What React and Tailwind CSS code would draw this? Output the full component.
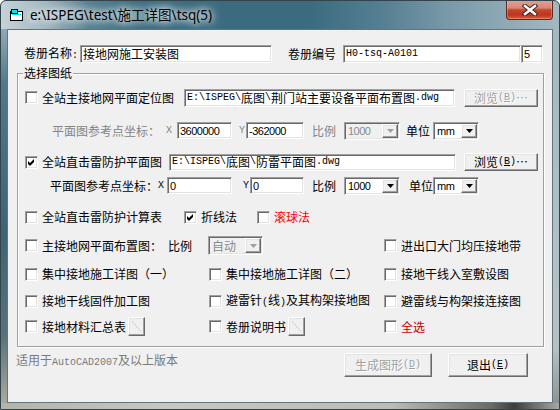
const SUNKEN = "border border-t-[#a0a0a0] border-l-[#a0a0a0] border-b-white border-r-white shadow-[inset_1px_1px_0_#696969,inset_-1px_-1px_0_#e3e3e3]"
const RAISED = "border border-t-white border-l-white border-b-[#696969] border-r-[#696969] shadow-[inset_-1px_-1px_0_#a0a0a0,inset_1px_1px_0_#e3e3e3]"
const MONO = "font-['Liberation_Mono',monospace] text-[10px]"
const NUM = "font-['Liberation_Sans',sans-serif] text-[11px] tracking-[-0.5px]"

function Mixed({ text }) {
  return text.split(/([\x20-\x7e]+)/).filter(Boolean).map((part, i) =>
    /^[\x20-\x7e]+$/.test(part)
      ? <span key={i} className={MONO}>{part}</span>
      : <span key={i}>{part}</span>
  )
}

function Check({ checked, className = '' }) {
  return (
    <span className={`w-[13px] h-[13px] shrink-0 bg-white flex items-center justify-center ${SUNKEN} ${className}`}>
      {checked && (
        <svg width="7" height="7" viewBox="0 0 7 7">
          <polygon points="0,2 2,4 6,0 6,3 2,7 0,5" fill="#000" />
        </svg>
      )}
    </span>
  )
}

function Field({ className = '', children }) {
  return (
    <div className={`shrink-0 bg-white flex items-center p-[1px] pl-[2px] overflow-hidden whitespace-nowrap ${SUNKEN} ${className}`}>
      {children}
    </div>
  )
}

function Combo({ className = '', disabled, children }) {
  return (
    <div className={`shrink-0 flex items-stretch p-[1px] ${disabled ? 'bg-[#f0f0f0] text-[#8a8a8a]' : 'bg-white'} ${SUNKEN} ${className}`}>
      <span className="flex-1 flex items-center pl-[2px] overflow-hidden whitespace-nowrap">{children}</span>
      <span className={`w-[16px] shrink-0 flex items-center justify-center bg-[#f0f0f0] ${RAISED}`}>
        <svg width="7" height="4" viewBox="0 0 7 4">
          <path d="M0 0h7L3.5 4z" fill={disabled ? '#a0a0a0' : '#000'} />
        </svg>
      </span>
    </div>
  )
}

function Btn({ className = '', disabled, children }) {
  return (
    <div className={`shrink-0 bg-[#f0f0f0] flex items-center justify-center whitespace-nowrap ${RAISED} ${disabled ? 'text-[#a0a0a0] [text-shadow:1px_1px_0_#fff]' : 'text-black'} ${className}`}>
      {children}
    </div>
  )
}

function Dots() {
  return (
    <svg width="11" height="13" viewBox="0 0 11 13">
      <path d="M1 1L10 12" stroke="#b4b4b4" strokeWidth="1" strokeDasharray="1 1" />
    </svg>
  )
}

function TitleIcon() {
  return (
    <svg width="14" height="12" viewBox="0 0 14 12">
      <rect x="0.5" y="2.5" width="12" height="9" fill="#fff" stroke="#000" />
      <rect x="1.5" y="0.5" width="6" height="4" fill="#18d8f0" stroke="#000" />
      <rect x="2" y="5" width="9" height="1" fill="#18d8f0" />
    </svg>
  )
}

function CloseX() {
  return (
    <svg width="16" height="12" viewBox="0 0 16 12">
      <path d="M3 2L13 10M13 2L3 10" stroke="#4a2a24" strokeWidth="4.6" strokeLinecap="square" />
      <path d="M3 2L13 10M13 2L3 10" stroke="#fff" strokeWidth="2.4" strokeLinecap="square" />
    </svg>
  )
}

export default function App() {
  return (
    <div className="w-[560px] h-[410px] bg-white font-['Noto_Sans_CJK_SC',sans-serif] text-[12px] leading-[14px] text-black">
      <div className="w-[560px] h-[410px] flex flex-col border border-[#34444c] rounded-t-[6px] overflow-hidden bg-[linear-gradient(90deg,#c6d2d8_0%,#a3b8c1_8%,#557f90_16%,#3a6a7e_25%,#3b6b7f_55%,#537f91_68%,#7899a8_80%,#a4b8c1_100%)]">
        {/* title bar */}
        <div className="h-[28px] flex items-start shrink-0">
          <div className="ml-[9px] mt-[8px]"><TitleIcon /></div>
          <div className="ml-[6px] mt-[5px] font-['Noto_Sans','Noto_Sans_CJK_SC',sans-serif] text-[13.5px] leading-[18px] [text-shadow:0_0_6px_#fff,0_0_10px_rgba(255,255,255,0.9),0_0_14px_rgba(255,255,255,0.7)]">
            {String.raw`e:\ISPEG\test\施工详图\tsq(5)`}
          </div>
          <div className="ml-auto mr-[6px] -mt-[1px] w-[47px] h-[20px] rounded-b-[4px] border border-[#5b2a21] border-t-0 flex items-center justify-center shadow-[inset_0_0_0_1px_rgba(255,200,190,0.35)] bg-[linear-gradient(180deg,#e3a294_0%,#d88877_42%,#c5472f_52%,#bd341b_78%,#d8633f_100%)]">
            <CloseX />
          </div>
        </div>

        <div className="flex h-[374px] shrink-0">
          <div className="w-[6px] shrink-0 bg-[linear-gradient(180deg,#8eaab6_0%,#4f7888_15%,#3e6474_55%,#56727c_82%,#aaa99e_100%)]" />
          {/* client */}
          <div className="w-[546px] h-[374px] shrink-0 border border-[#62747c] bg-[#f0f0f0] flex flex-col">
            <div className="mt-[15px] h-[18px] flex items-center">
              <span className="ml-[16px] w-[56px] shrink-0">卷册名称<span className={MONO}>:</span></span>
              <Field className="w-[192px] h-[18px]">接地网施工安装图</Field>
              <span className="ml-[16px] w-[55px] shrink-0">卷册编号</span>
              <Field className="w-[178px] h-[18px]"><span className={MONO}>H0-tsq-A0101</span></Field>
              <Field className="w-[22px] h-[18px]"><span className={NUM}>5</span></Field>
            </div>

            <div className="relative ml-[9px] mt-[10px] w-[527px] h-[274px] shrink-0 border border-[#a0a0a0] shadow-[inset_1px_1px_0_#fff,1px_1px_0_#fff] flex flex-col">
              <span className="absolute left-[5px] -top-[8px] px-[1px] bg-[#f0f0f0]">选择图纸</span>

              <div className="mt-[14px] h-[19px] flex items-center">
                <Check className="ml-[7px]" />
                <span className="ml-[4px] w-[142px] shrink-0">全站主接地网平面定位图</span>
                <Field className="w-[271px] h-[18px]"><Mixed text={String.raw`E:\ISPEG\底图\荆门站主要设备平面布置图.dwg`} /></Field>
                <Btn disabled className="ml-[9px] w-[74px] h-[18px]">
                  浏览<span className={MONO}>(<u>B</u>)</span>⋯
                </Btn>
              </div>

              <div className="mt-[15px] h-[17px] flex items-center text-[#838383]">
                <span className="ml-[34px] w-[114px] shrink-0">平面图参考点坐标：</span>
                <span className={`w-[11px] shrink-0 ${MONO}`}>X</span>
                <Field className="w-[55px] h-[17px] text-black"><span className={NUM}>3600000</span></Field>
                <span className={`ml-[7px] w-[7px] shrink-0 ${MONO}`}>Y</span>
                <Field className="w-[58px] h-[17px] text-black"><span className={NUM}>-362000</span></Field>
                <span className="ml-[8px] w-[32px] shrink-0">比例</span>
                <Combo disabled className="w-[56px] h-[18px]"><span className={NUM}>1000</span></Combo>
                <span className="ml-[6px] w-[27px] shrink-0 text-black">单位</span>
                <Combo className="w-[46px] h-[18px] text-black"><span className={NUM}>mm</span></Combo>
              </div>

              <div className="mt-[14px] h-[18px] flex items-center">
                <Check checked className="ml-[7px]" />
                <span className="ml-[4px] w-[127px] shrink-0">全站直击雷防护平面图</span>
                <Field className="w-[287px] h-[17px]"><Mixed text={String.raw`E:\ISPEG\底图\防雷平面图.dwg`} /></Field>
                <Btn className="ml-[8px] w-[74px] h-[18px]">
                  浏览<span className={MONO}>(<u>B</u>)</span>⋯
                </Btn>
              </div>

              <div className="mt-[6px] h-[17px] flex items-center">
                <span className="ml-[32px] w-[108px] shrink-0">平面图参考点坐标：</span>
                <span className={`w-[9px] shrink-0 ${MONO}`}>X</span>
                <Field className="w-[65px] h-[17px]"><span className={NUM}>0</span></Field>
                <span className={`ml-[11px] w-[7px] shrink-0 ${MONO}`}>Y</span>
                <Field className="w-[54px] h-[17px]"><span className={NUM}>0</span></Field>
                <span className="ml-[8px] w-[32px] shrink-0">比例</span>
                <Combo className="w-[56px] h-[18px]"><span className={NUM}>1000</span></Combo>
                <span className="ml-[9px] w-[24px] shrink-0">单位</span>
                <Combo className="w-[46px] h-[18px]"><span className={NUM}>mm</span></Combo>
              </div>

              <div className="mt-[16px] h-[14px] flex items-center">
                <Check className="ml-[7px]" />
                <span className="ml-[4px] w-[142px] shrink-0">全站直击雷防护计算表</span>
                <Check checked />
                <span className="ml-[4px] w-[56px] shrink-0">折线法</span>
                <Check />
                <span className="ml-[4px] text-[#ff0000]">滚球法</span>
              </div>

              <div className="mt-[12px] h-[19px] flex items-center">
                <Check className="ml-[7px]" />
                <span className="ml-[4px] w-[126px] shrink-0">主接地网平面布置图：</span>
                <span className="w-[40px] shrink-0">比例</span>
                <Combo disabled className="w-[55px] h-[19px]">自动</Combo>
                <Check className="ml-[121px]" />
                <span className="ml-[4px]">进出口大门均压接地带</span>
              </div>

              <div className="mt-[12px] h-[14px] flex items-center">
                <Check className="ml-[7px]" />
                <span className="ml-[4px] w-[167px] shrink-0">集中接地施工详图（一）</span>
                <Check />
                <span className="ml-[4px] w-[158px] shrink-0">集中接地施工详图（二）</span>
                <Check />
                <span className="ml-[4px]">接地干线入室敷设图</span>
              </div>

              <div className="mt-[13px] h-[14px] flex items-center">
                <Check className="ml-[7px]" />
                <span className="ml-[4px] w-[167px] shrink-0">接地干线固件加工图</span>
                <Check />
                <span className="ml-[4px] w-[158px] shrink-0"><Mixed text="避雷针(线)及其构架接地图" /></span>
                <Check />
                <span className="ml-[4px]">避雷线与构架接连接图</span>
              </div>

              <div className="mt-[9px] h-[19px] flex items-center">
                <Check className="ml-[7px]" />
                <span className="ml-[4px] w-[86px] shrink-0">接地材料汇总表</span>
                <Btn className="w-[17px] h-[19px]"><Dots /></Btn>
                <Check className="ml-[64px]" />
                <span className="ml-[4px] w-[62px] shrink-0">卷册说明书</span>
                <Btn className="w-[17px] h-[19px]"><Dots /></Btn>
                <Check className="ml-[79px]" />
                <span className="ml-[4px] text-[#c00000]">全选</span>
              </div>
            </div>

            <div className="mt-[6px] h-[24px] flex items-start">
              <span className="ml-[8px] w-[328px] shrink-0 text-[#7a7a7a]"><Mixed text="适用于AutoCAD2007及以上版本" /></span>
              <Btn disabled className="w-[88px] h-[24px]">
                生成图形<span className={MONO}>(<u>D</u>)</span>
              </Btn>
              <Btn className="ml-[16px] w-[80px] h-[24px]">
                退出<span className={MONO}>(<u>E</u>)</span>
              </Btn>
            </div>
          </div>
          <div className="w-[6px] shrink-0 bg-[linear-gradient(180deg,#a4b8c1_0%,#aebfc6_50%,#b6c1c3_85%,#8e9496_100%)]" />
        </div>
        <div className="h-[6px] shrink-0 bg-[linear-gradient(90deg,#b4b3a8_0%,#c9c8bf_30%,#bdbcb2_70%,#6a6a60_88%,#3f3f38_92%,#a8a8a0_100%)]" />
      </div>
    </div>
  )
}
